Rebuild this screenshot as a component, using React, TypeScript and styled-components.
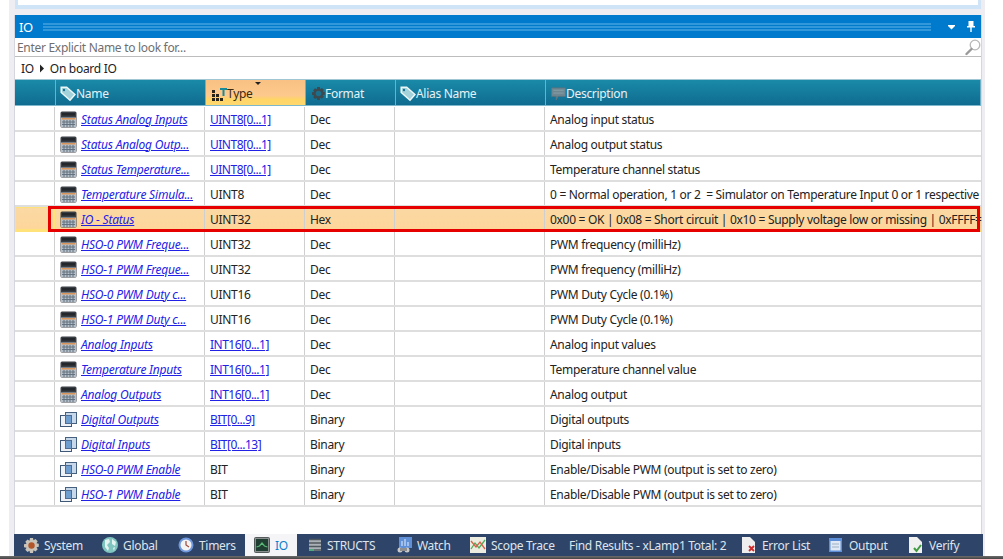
import React from 'react';
import styled, { createGlobalStyle } from 'styled-components';

const GlobalStyle = createGlobalStyle`
  html, body {
    margin: 0;
    padding: 0;
    background: #ffffff;
    overflow: hidden;
  }
  * { box-sizing: border-box; }
`;

const FONT = `"Noto Sans", "Open Sans", sans-serif`;

const Page = styled.div`
  width: 1003px;
  height: 559px;
  display: flex;
  flex-direction: column;
  background: #ffffff;
  font-family: ${FONT};
  font-size: 12px;
  letter-spacing: -0.3px;
  color: #1e1e1e;
  overflow: hidden;
`;

const Workspace = styled.div`
  width: 976px;
  height: 556px;
  margin-left: 9px;
  padding: 0 4px 0 5px;
  background: #eeeef2;
  display: flex;
  flex-direction: column;
`;

const TopPane = styled.div`
  height: 9px;
  margin-left: 1px;
  flex: none;
  background: #ffffff;
  border: 3px solid #cfe4f7;
  border-top: 0;
  border-bottom-width: 4px;
`;

const Panel = styled.section`
  margin: 6px 0 0 1px;
  flex: 1;
  min-height: 0;
  background: #ffffff;
  box-shadow: -1px 0 #d6d6de, 1px 0 #d6d6de;
  display: flex;
  flex-direction: column;
`;

const TitleBar = styled.header`
  height: 23px;
  flex: none;
  background: #007acc;
  display: flex;
  align-items: center;
  padding: 0 6px 0 4px;
  color: #ffffff;
  font-size: 13px;
`;

const Grip = styled.div`
  flex: 1;
  height: 8px;
  margin: 0 17px 0 10px;
  background-image: radial-gradient(circle at 1px 1px, #4fa8e2 0.6px, transparent 0.9px);
  background-size: 2px 3px;
`;

const TitleButtons = styled.div`
  display: flex;
  align-items: center;
  gap: 12px;
`;

const SearchRow = styled.div`
  height: 19px;
  flex: none;
  display: flex;
  align-items: center;
  justify-content: space-between;
  padding-left: 2px;
  border-bottom: 1px solid #bdbdbd;
  color: #6f6f6f;
  font-size: 12px;
`;

const Breadcrumb = styled.div`
  height: 22px;
  flex: none;
  display: flex;
  align-items: center;
  gap: 5px;
  padding: 1px 0 0 6px;
  font-size: 12px;
  color: #222222;
`;

const COLUMNS = '40px 150px 100px 90px 150px 1fr';

const HeaderRow = styled.div`
  height: 27px;
  flex: none;
  display: grid;
  grid-template-columns: ${COLUMNS};
  background: linear-gradient(#1a8aa9, #0f6c90);
  border-top: 1px solid #9fc6d2;
  border-bottom: 1px solid #7db8cc;
`;

const HeaderCell = styled.div<{ $active?: boolean; $pad?: number }>`
  position: relative;
  display: flex;
  align-items: center;
  padding: 2px 0 0 ${(p) => p.$pad ?? 4}px;
  color: ${(p) => (p.$active ? '#3a2a10' : '#e6f2f6')};
  background: ${(p) =>
    p.$active ? 'linear-gradient(#f9c184 0%, #fdc98c 62%, #ffd566 78%, #ffd86e 100%)' : 'transparent'};
  border-right: 1px solid #6fb0c6;
  border-left: 1px solid #6fb0c6;
  margin-right: -1px;
  font-size: 12px;
  &:first-child {
    border-left: 0;
  }
  &:last-child {
    margin-right: 0;
  }
`;

const SortMark = styled.span`
  position: absolute;
  top: 2px;
  left: 49px;
  width: 0;
  height: 0;
  border-left: 3px solid transparent;
  border-right: 3px solid transparent;
  border-top: 3px solid #222222;
`;

const Rows = styled.div`
  flex: none;
  position: relative;
  padding-top: 1px;
`;

const Row = styled.div<{ $selected?: boolean }>`
  height: 25px;
  display: grid;
  grid-template-columns: ${COLUMNS};
  border-bottom: 2px solid ${(p) => (p.$selected ? '#ffe27a' : '#dedede')};
  background: ${(p) => (p.$selected ? 'linear-gradient(#fbd9a4, #fdd69a)' : '#ffffff')};
`;

const Cell = styled.div`
  display: flex;
  align-items: center;
  padding: 1px 0 0 5px;
  min-width: 0;
  white-space: pre;
  border-right: 1px solid #cfcfcf;
  color: #222222;
  font-size: 12px;
  &:last-child {
    border-right: 0;
  }
`;

const Gutter = styled(Cell)<{ $selected?: boolean }>`
  padding: 0;
  ${(p) => p.$selected && 'outline: 1px solid #ffe27a; outline-offset: -1px;'}
`;

const NameCell = styled(Cell)`
  gap: 4px;
`;

const NameLink = styled.a`
  color: #2222e6;
  font-style: italic;
  letter-spacing: -0.2px;
  text-decoration: underline;
`;

const TypeLink = styled.a`
  color: #2222e6;
  letter-spacing: -0.5px;
  text-decoration: underline;
`;

const Highlight = styled.div`
  position: absolute;
  left: 33px;
  right: 1px;
  top: 100px;
  height: 26px;
  border: 3px solid #e60000;
  pointer-events: none;
`;

const TabBar = styled.nav`
  height: 22px;
  flex: none;
  margin: auto -2px 0 -1px;
  background: #2e4468;
  display: flex;
  align-items: stretch;
  color: #dfe5ee;
  font-size: 12px;
`;

const Tab = styled.div<{ $active?: boolean; $width: number; $gap?: number; $pad?: number }>`
  flex: none;
  width: ${(p) => p.$width}px;
  display: flex;
  align-items: center;
  gap: ${(p) => p.$gap ?? 5}px;
  padding-left: ${(p) => p.$pad ?? 10}px;
  white-space: nowrap;
  ${(p) => p.$active && 'background: #f5f5f7; color: #0e7fce;'}
`;

const BottomLine = styled.div`
  height: 3px;
  flex: none;
  background: linear-gradient(#6c6c6c, #444444);
`;

const TagIcon = () => (
  <svg width="16" height="16" viewBox="0 0 16 16" style={{ flex: 'none' }}>
    <path d="M1.200 1.200h5.500l8.300 7.300-5 5.700-8.800-7.700z" fill="#a4d2da" stroke="#eef7f8" strokeWidth="1.500" />
    <circle cx="4" cy="4" r="1.200" fill="#17708f" />
  </svg>
);

const CalcIcon = () => (
  <svg width="17" height="17" viewBox="0 0 17 17" style={{ flex: 'none' }}>
    <rect x="0.500" y="0.500" width="16" height="16" rx="1.500" fill="#3a3f45" />
    <rect x="2" y="2" width="13" height="2.500" fill="#23272b" />
    <rect x="1" y="6.500" width="15" height="9.500" fill="#b4c0cb" />
    <path d="M4 9v7M7 9v7M10 9v7M13 9v7M2 11h13M2 13.500h13" stroke="#64737f" strokeWidth="1" />
    <rect x="2" y="7" width="13" height="1.500" fill="#d9955a" />
  </svg>
);

const StackIcon = () => (
  <svg width="17" height="17" viewBox="0 0 17 17" style={{ flex: 'none' }}>
    <rect x="5.500" y="1.500" width="11" height="11" fill="#c6d8ea" stroke="#46617f" />
    <rect x="0.500" y="4.500" width="11" height="11" fill="#eef2f6" stroke="#3f5878" />
    <rect x="5.500" y="4.500" width="6" height="8" fill="#6f9fd0" stroke="#4f6d92" />
  </svg>
);

const CaretIcon = () => (
  <svg width="6" height="9" viewBox="0 0 6 9">
    <path d="M1 0.500l4 4-4 4z" fill="#222222" />
  </svg>
);

const DropIcon = () => (
  <svg width="7" height="6" viewBox="0 0 7 6">
    <path d="M0 1h7v1L3.500 5.500 0 2z" fill="#ffffff" />
  </svg>
);

const PinIcon = () => (
  <svg width="8" height="11" viewBox="0 0 8 11">
    <path d="M1.500 0h5v5h1.500v1.500H4.700V11H3.300V6.500H0V5h1.500z" fill="#ffffff" />
  </svg>
);

const SearchIcon = () => (
  <svg width="16" height="17" viewBox="0 0 16 17">
    <circle cx="10" cy="6" r="4.800" fill="#ffffff" stroke="#b8b8b8" strokeWidth="1.300" />
    <path d="M6.500 10l-5 5" stroke="#9a9a9a" strokeWidth="2.400" strokeLinecap="round" />
  </svg>
);

const TypeIcon = () => (
  <svg width="15" height="14" viewBox="0 0 15 14" style={{ flex: 'none' }}>
    <path d="M0 3h3v3H0zM0 7h3v3H0zM0 11h3v3H0zM4 7h3v3H4zM4 11h3v3H4zM8 11h3v3H8z" fill="#2a2418" />
    <path d="M8 1h7v2h-2.500v6h-2V3H8z" fill="#178a9c" />
  </svg>
);

const GearIcon = ({ dark, size = 15 }: { dark?: boolean; size?: number }) => (
  <svg width={size} height={size} viewBox="0 0 15 15" style={{ flex: 'none' }}>
    <path
      d="M6 0h3l.5 2.300 2-1.200 2.200 2.200-1.200 2 2.300.5v3l-2.300.5 1.200 2-2.200 2.200-2-1.200L9 15H6l-.5-2.300-2 1.200-2.200-2.200 1.200-2L0 9.200v-3l2.500-.5-1.200-2 2.200-2.200 2 1.200z"
      fill={dark ? '#3c4a50' : '#c9c4ba'}
    />
    <circle cx="7.500" cy="7.500" r="3.200" fill={dark ? '#1a6f8c' : '#b3562a'} />
  </svg>
);

const CommentIcon = () => (
  <svg width="15" height="14" viewBox="0 0 16 14" style={{ flex: 'none' }}>
    <path d="M0.500 0.500h15v9h-8l-2 4v-4h-5z" fill="#6f8791" stroke="#5a7480" />
    <path d="M2.500 3h11M2.500 6h11" stroke="#85a0aa" strokeWidth="1" />
  </svg>
);

const GlobeIcon = () => (
  <svg width="16" height="16" viewBox="0 0 16 16" style={{ flex: 'none' }}>
    <circle cx="8" cy="8" r="8" fill="#7fc4bf" />
    <path d="M3 3l4-1 1 3-3 3 2 3-1 3-3-4zM10 2l4 3-1 4-3-2zM11 11l2-1-1 4z" fill="#e4f2f0" />
  </svg>
);

const ClockIcon = () => (
  <svg width="16" height="16" viewBox="0 0 16 16" style={{ flex: 'none' }}>
    <circle cx="8" cy="8" r="7.500" fill="#6f97dd" />
    <circle cx="8" cy="8" r="5.500" fill="#f3f3f3" />
    <path d="M8 4v4l3 2" stroke="#a0483c" strokeWidth="1.200" fill="none" />
  </svg>
);

const MonitorIcon = () => (
  <svg width="16" height="16" viewBox="0 0 16 16" style={{ flex: 'none' }}>
    <rect x="0.500" y="0.500" width="15" height="15" rx="1" fill="#8a8f8f" stroke="#555a5a" />
    <rect x="2" y="2" width="12" height="12" fill="#1f3d30" />
    <path d="M2.500 10l3-1 2.500-3 2.500 3 3 1" stroke="#58b878" strokeWidth="1.200" fill="none" />
  </svg>
);

const DbIcon = () => (
  <svg width="14" height="16" viewBox="0 0 14 16" style={{ flex: 'none' }}>
    <path d="M1 2h12v12H1z" fill="#a9b0b6" />
    <path d="M1 2.500h12M1 6h12M1 9.500h12M1 13h12" stroke="#50585f" strokeWidth="1.400" />
    <path d="M1 13h5" stroke="#4ac08a" strokeWidth="1.400" />
  </svg>
);

const WatchIcon = () => (
  <svg width="16" height="16" viewBox="0 0 16 16" style={{ flex: 'none' }}>
    <rect x="3" y="0" width="13" height="11" fill="#5f8fd6" />
    <path d="M6 9V4M9 9V2M12 9V5" stroke="#cfe0f6" strokeWidth="1.200" />
    <circle cx="4" cy="13" r="2.500" fill="#c9c9c9" />
    <circle cx="11" cy="13" r="2.500" fill="#c9c9c9" />
    <rect x="4" y="11" width="7" height="3" fill="#8e8e8e" />
  </svg>
);

const ScopeIcon = () => (
  <svg width="16" height="16" viewBox="0 0 16 16" style={{ flex: 'none' }}>
    <rect width="16" height="16" fill="#ecece0" />
    <path d="M1 12l4-6 4 5 6-8" stroke="#4fae5a" strokeWidth="1.300" fill="none" />
    <path d="M1 4l5 6 4-5 5 7" stroke="#d8604a" strokeWidth="1.300" fill="none" />
  </svg>
);

const ErrorIcon = () => (
  <svg width="13" height="16" viewBox="0 0 13 16" style={{ flex: 'none' }}>
    <path d="M0 0h8l5 5v11H0z" fill="#eeeeee" />
    <path d="M7 9l5 5M12 9l-5 5" stroke="#d02a2a" strokeWidth="1.800" />
  </svg>
);

const OutputIcon = () => (
  <svg width="13" height="14" viewBox="0 0 13 14" style={{ flex: 'none' }}>
    <rect width="13" height="14" fill="#5d8fd8" />
    <rect x="1.500" y="3" width="10" height="9.500" fill="#dfe8f4" />
    <path d="M3 6h7M3 9h7" stroke="#9db0c8" />
  </svg>
);

const VerifyIcon = () => (
  <svg width="13" height="16" viewBox="0 0 13 16" style={{ flex: 'none' }}>
    <path d="M0 0h8l5 5v11H0z" fill="#f0f0f0" />
    <path d="M5 11l2.500 3L12 8" stroke="#3f9a40" strokeWidth="2" fill="none" />
  </svg>
);

type Variable = {
  name: string;
  type: string;
  typeLink?: boolean;
  format: string;
  description: string;
  stack?: boolean;
  selected?: boolean;
};

const variables: Variable[] = [
  { name: 'Status Analog Inputs', type: 'UINT8[0...1]', typeLink: true, format: 'Dec', description: 'Analog input status' },
  { name: 'Status Analog Outp...', type: 'UINT8[0...1]', typeLink: true, format: 'Dec', description: 'Analog output status' },
  { name: 'Status Temperature...', type: 'UINT8[0...1]', typeLink: true, format: 'Dec', description: 'Temperature channel status' },
  { name: 'Temperature Simula...', type: 'UINT8', format: 'Dec', description: '0 = Normal operation, 1 or 2  = Simulator on Temperature Input 0 or 1 respective' },
  { name: 'IO - Status', type: 'UINT32', format: 'Hex', selected: true, description: '0x00 = OK | 0x08 = Short circuit | 0x10 = Supply voltage low or missing | 0xFFFF=' },
  { name: 'HSO-0 PWM Freque...', type: 'UINT32', format: 'Dec', description: 'PWM frequency (milliHz)' },
  { name: 'HSO-1 PWM Freque...', type: 'UINT32', format: 'Dec', description: 'PWM frequency (milliHz)' },
  { name: 'HSO-0 PWM Duty c...', type: 'UINT16', format: 'Dec', description: 'PWM Duty Cycle (0.1%)' },
  { name: 'HSO-1 PWM Duty c...', type: 'UINT16', format: 'Dec', description: 'PWM Duty Cycle (0.1%)' },
  { name: 'Analog Inputs', type: 'INT16[0...1]', typeLink: true, format: 'Dec', description: 'Analog input values' },
  { name: 'Temperature Inputs', type: 'INT16[0...1]', typeLink: true, format: 'Dec', description: 'Temperature channel value' },
  { name: 'Analog Outputs', type: 'INT16[0...1]', typeLink: true, format: 'Dec', description: 'Analog output' },
  { name: 'Digital Outputs', type: 'BIT[0...9]', typeLink: true, format: 'Binary', description: 'Digital outputs', stack: true },
  { name: 'Digital Inputs', type: 'BIT[0...13]', typeLink: true, format: 'Binary', description: 'Digital inputs', stack: true },
  { name: 'HSO-0 PWM Enable', type: 'BIT', format: 'Binary', description: 'Enable/Disable PWM (output is set to zero)', stack: true },
  { name: 'HSO-1 PWM Enable', type: 'BIT', format: 'Binary', description: 'Enable/Disable PWM (output is set to zero)', stack: true },
];

export default function App() {
  return (
    <>
      <GlobalStyle />
      <Page>
        <Workspace>
          <TopPane />
          <Panel>
            <TitleBar>
              IO
              <Grip />
              <TitleButtons>
                <DropIcon />
                <PinIcon />
              </TitleButtons>
            </TitleBar>
            <SearchRow>
              Enter Explicit Name to look for...
              <SearchIcon />
            </SearchRow>
            <Breadcrumb>
              IO <CaretIcon /> On board IO
            </Breadcrumb>
            <HeaderRow>
              <HeaderCell />
              <HeaderCell>
                <TagIcon />
                Name
              </HeaderCell>
              <HeaderCell $active $pad={6}>
                <TypeIcon />
                Type
                <SortMark />
              </HeaderCell>
              <HeaderCell $pad={6}>
                <GearIcon dark size={13} />
                Format
              </HeaderCell>
              <HeaderCell>
                <TagIcon />
                Alias Name
              </HeaderCell>
              <HeaderCell $pad={5}>
                <CommentIcon />
                Description
              </HeaderCell>
            </HeaderRow>
            <Rows>
              {variables.map((v) => (
                <Row key={v.name} $selected={v.selected}>
                  <Gutter $selected={v.selected} />
                  <NameCell>
                    {v.stack ? <StackIcon /> : <CalcIcon />}
                    <NameLink>{v.name}</NameLink>
                  </NameCell>
                  <Cell>{v.typeLink ? <TypeLink>{v.type}</TypeLink> : v.type}</Cell>
                  <Cell>{v.format}</Cell>
                  <Cell />
                  <Cell>{v.description}</Cell>
                </Row>
              ))}
              <Highlight />
            </Rows>
            <TabBar>
              <Tab $width={78}><GearIcon /><span>System</span></Tab>
              <Tab $width={76}><GlobeIcon /><span>Global</span></Tab>
              <Tab $width={77}><ClockIcon /><span>Timers</span></Tab>
              <Tab $active $width={52} $pad={9}><MonitorIcon /><span>IO</span></Tab>
              <Tab $width={89} $pad={11}><DbIcon /><span>STRUCTS</span></Tab>
              <Tab $width={74}><WatchIcon /><span>Watch</span></Tab>
              <Tab $width={99}><ScopeIcon /><span>Scope Trace</span></Tab>
              <Tab $width={173}><span>Find Results - xLamp1 Total: 2</span></Tab>
              <Tab $width={87} $gap={7}><ErrorIcon /><span>Error List</span></Tab>
              <Tab $width={80} $gap={7}><OutputIcon /><span>Output</span></Tab>
              <Tab $width={70} $gap={7}><VerifyIcon /><span>Verify</span></Tab>
            </TabBar>
          </Panel>
        </Workspace>
        <BottomLine />
      </Page>
    </>
  );
}
